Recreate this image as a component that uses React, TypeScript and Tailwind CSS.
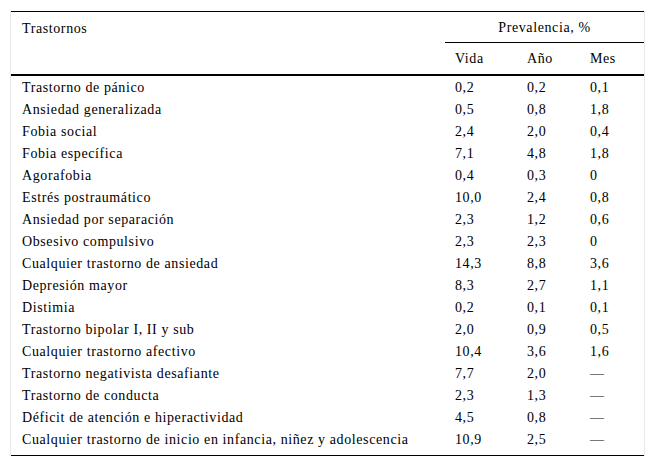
const rows: [string, string, string, string][] = [
  ["Trastorno de pánico", "0,2", "0,2", "0,1"],
  ["Ansiedad generalizada", "0,5", "0,8", "1,8"],
  ["Fobia social", "2,4", "2,0", "0,4"],
  ["Fobia específica", "7,1", "4,8", "1,8"],
  ["Agorafobia", "0,4", "0,3", "0"],
  ["Estrés postraumático", "10,0", "2,4", "0,8"],
  ["Ansiedad por separación", "2,3", "1,2", "0,6"],
  ["Obsesivo compulsivo", "2,3", "2,3", "0"],
  ["Cualquier trastorno de ansiedad", "14,3", "8,8", "3,6"],
  ["Depresión mayor", "8,3", "2,7", "1,1"],
  ["Distimia", "0,2", "0,1", "0,1"],
  ["Trastorno bipolar I, II y sub", "2,0", "0,9", "0,5"],
  ["Cualquier trastorno afectivo", "10,4", "3,6", "1,6"],
  ["Trastorno negativista desafiante", "7,7", "2,0", "—"],
  ["Trastorno de conducta", "2,3", "1,3", "—"],
  ["Déficit de atención e hiperactividad", "4,5", "0,8", "—"],
  ["Cualquier trastorno de inicio en infancia, niñez y adolescencia", "10,9", "2,5", "—"],
]

export default function App() {
  return (
    <div className="min-h-screen bg-white pt-[11px] pl-[10px]">
      <div className="w-[635px] border-x border-[#e8e8e8] font-['Liberation_Serif',serif] text-[14px] tracking-[0.6px] text-black">
        {/* header */}
        <div className="grid grid-cols-[434px_71px_62px_66px] border-t border-black border-b-2">
          <div className="row-span-2 pl-[11px] pt-[9px] leading-[15px]">Trastornos</div>
          <div className="col-span-3 h-[31px] pt-[1px] leading-[30px] text-center border-b border-black">Prevalencia, %</div>
          <div className="h-[31px] pt-[1px] leading-[30px] pl-[10px]">Vida</div>
          <div className="h-[31px] pt-[1px] leading-[30px] pl-[11px]">Año</div>
          <div className="h-[31px] pt-[1px] leading-[30px] pl-[12px]">Mes</div>
        </div>

        {/* body */}
        <div className="pt-[1px] pb-[4px] border-b border-black">
          {rows.map(r => (
            <div key={r[0]} className="grid grid-cols-[434px_71px_62px_66px] h-[22px] leading-[22px]">
              <div className="pl-[11px] whitespace-nowrap">{r[0]}</div>
              <div className="pl-[10px]">{r[1]}</div>
              <div className="pl-[11px]">{r[2]}</div>
              <div className="pl-[12px]">{r[3]}</div>
            </div>
          ))}
        </div>
      </div>
    </div>
  )
}
